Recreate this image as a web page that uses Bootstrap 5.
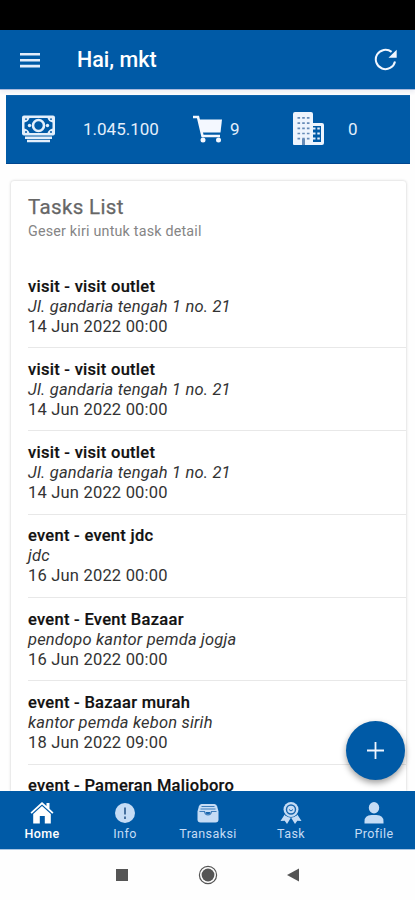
<!DOCTYPE html>
<html lang="id">
<head>
<meta charset="utf-8">
<meta name="viewport" content="width=device-width, initial-scale=1">
<title>Hai, mkt</title>
<link href="https://cdn.jsdelivr.net/npm/bootstrap@5.3.0/dist/css/bootstrap.min.css" rel="stylesheet">
<style>
:root{--brand:#005aa6;--soft:#c5dcf5}
body{font-family:Roboto,"Liberation Sans",sans-serif;background:#fefefe;color:#222}
svg{display:block;flex:none}
.phone{height:900px}
.status-strip{height:30px;background:#000}
.app-header{height:59px;background:var(--brand);padding:1px 17px 0 20px;box-shadow:0 1px 0 #a9b9dc,0 4px 3px #f1f2f6;z-index:1}
.app-title{font-size:21.5px;font-weight:500;line-height:28px;margin-left:37px}
.stats{height:69px;margin:6px 5px 0 6px;background:var(--brand);color:#e4effb;font-size:17px;border-bottom:1px solid #00468f}
.stats span{padding-top:2px}
.stat-money{width:187px;padding-left:15px}
.stat-cart{width:100px}
.task-panel{margin:17px 9px 0 11px;border:0;border-radius:3px 3px 0 0;background:#fff;box-shadow:0 0 3px rgba(0,0,0,.22);min-height:0}
.panel-head{height:83.9px;padding:12.600px 17px 0}
.panel-title{font-size:20.5px;line-height:27px;font-weight:400;color:#666;letter-spacing:.36px;-webkit-text-stroke:.25px #666}
.panel-sub{font-size:14.3px;line-height:20px;color:#858585;letter-spacing:.2px}
.task-row{height:83.3px;flex:none;margin-left:17px;padding:11.700px 0 0;border-bottom:1.5px solid #e8e8e8;font-size:16.5px;line-height:20px;white-space:nowrap}
.task-name{font-weight:500;color:#111;letter-spacing:.28px;-webkit-text-stroke:.2px #111}
.task-place{letter-spacing:.18px;color:#333}
.task-date{letter-spacing:.2px;color:#333}
.fab{width:59px;height:59px;right:10px;bottom:11px;background:var(--brand);box-shadow:0 3px 6px rgba(0,0,0,.38)}
.tabs{height:59px;background:var(--brand);border-bottom:1px solid #a9c5e2}
.tab{color:var(--soft);font-size:12.5px;line-height:16px;padding:10px 0 0 1px;letter-spacing:.42px}
.tab span{padding-top:1px}
.tab.active{color:#fff;font-weight:500}
.system-nav{height:50px;background:#fefefe;gap:66px}
</style>
<script src="https://cdn.jsdelivr.net/npm/bootstrap@5.3.0/dist/js/bootstrap.bundle.min.js"></script>
</head>
<body>
<div class="phone d-flex flex-column overflow-hidden">
<div class="status-strip flex-shrink-0"></div>
<header class="app-header d-flex align-items-center flex-shrink-0 text-white position-relative">
<svg width="20" height="16" viewBox="0 0 20 16" fill="none" stroke="#e4edfb" stroke-width="2.6"><path d="M0 2.3h20M0 8.2h20M0 14.1h20"/></svg>
<div class="app-title">Hai, mkt</div>
<svg class="ms-auto" width="24" height="24" viewBox="0 0 24 24"><path d="M17.6 3.9A9.7 9.7 0 1 0 21 13.5" fill="none" stroke="#f2f7ff" stroke-width="2"/><path d="M22.7 1.7v8.1h-8.2z" fill="#f2f7ff"/></svg>
</header>
<main class="d-flex flex-column flex-grow-1 position-relative overflow-hidden">
<section class="stats d-flex align-items-center flex-shrink-0">
<div class="stat-money d-flex align-items-center">
<svg width="35" height="30" viewBox="0 0 35 30"><rect x="1" y="1.5" width="33" height="20" rx="2" fill="#e4effb"/><path d="M8.500 4h18q1 3.500 5 4.500v6q-4 1-5 4.500h-18q-1-3.500-5-4.500v-6q4-1 5-4.500z" fill="#005aa6"/><circle cx="17.500" cy="11.500" r="5.500" fill="none" stroke="#e4effb" stroke-width="2.600"/><circle cx="8.500" cy="11.500" r="1.700" fill="#e4effb"/><circle cx="26.500" cy="11.500" r="1.700" fill="#e4effb"/><path d="M4 5.200h2M29 5.200h2M4 18h2M29 18h2" stroke="#005aa6" stroke-width="1.300"/><path d="M4 23.800h27M6 27h23" stroke="#e4effb" stroke-width="2.500"/></svg>
<span style="margin-left:27px">1.045.100</span>
</div>
<div class="stat-cart d-flex align-items-center gap-2">
<svg width="29" height="28" viewBox="0 0 29 28"><path d="M0 2h5L9.500 21h17.500" fill="none" stroke="#f4f8ff" stroke-width="2.600"/><path d="M5.500 4.500H29l-1.500 13H8.500z" fill="#f4f8ff"/><circle cx="10" cy="25" r="2.500" fill="#f4f8ff"/><circle cx="25.500" cy="25" r="2.500" fill="#f4f8ff"/></svg>
<span>9</span>
</div>
<div class="d-flex align-items-center gap-4">
<svg width="31" height="34" viewBox="0 0 31 34"><path d="M0 32V2q0-2 2-2h16q2 0 2 2v9h9q2 0 2 2v18q0 2-2 2H1q-1 0-1-1z" fill="#edf4fd"/><path d="M20 14h8v16h-8z" fill="#005aa6"/><path d="M4.500 5.900h12M4.500 11.100h12M4.500 16.300h12M4.500 21.500h12M4.500 26.700h12" stroke="#668bb7" stroke-width="1.700" stroke-dasharray="2.600 2.100"/><path d="M20 16.500h8M20 21.500h8M20 26.500h8" stroke="#e4effb" stroke-width="2.200" stroke-dasharray="2.500 1.800"/><path d="M9 27h3v6H9z" fill="#668bb7"/></svg>
<span>0</span>
</div>
</section>
<section class="task-panel card flex-grow-1 overflow-hidden">
<div class="panel-head flex-shrink-0">
<div class="panel-title">Tasks List</div>
<div class="panel-sub">Geser kiri untuk task detail</div>
</div>
<div class="task-row"><div class="task-name">visit - visit outlet</div><div class="task-place fst-italic">Jl. gandaria tengah 1 no. 21</div><div class="task-date">14 Jun 2022 00:00</div></div>
<div class="task-row"><div class="task-name">visit - visit outlet</div><div class="task-place fst-italic">Jl. gandaria tengah 1 no. 21</div><div class="task-date">14 Jun 2022 00:00</div></div>
<div class="task-row"><div class="task-name">visit - visit outlet</div><div class="task-place fst-italic">Jl. gandaria tengah 1 no. 21</div><div class="task-date">14 Jun 2022 00:00</div></div>
<div class="task-row"><div class="task-name">event - event jdc</div><div class="task-place fst-italic">jdc</div><div class="task-date">16 Jun 2022 00:00</div></div>
<div class="task-row"><div class="task-name">event - Event Bazaar</div><div class="task-place fst-italic">pendopo kantor pemda jogja</div><div class="task-date">16 Jun 2022 00:00</div></div>
<div class="task-row"><div class="task-name">event - Bazaar murah</div><div class="task-place fst-italic">kantor pemda kebon sirih</div><div class="task-date">18 Jun 2022 09:00</div></div>
<div class="task-row"><div class="task-name">event - Pameran Malioboro</div></div>
</section>
<button class="fab btn rounded-circle position-absolute p-0 border-0 d-flex align-items-center justify-content-center" aria-label="Tambah"><svg width="17" height="17" viewBox="0 0 17 17" stroke="#f0f6ff" stroke-width="1.800"><path d="M8.500 0v17M0 8.500h17"/></svg></button>
</main>
<nav class="tabs row row-cols-5 g-0 flex-shrink-0">
<div class="tab active col d-flex flex-column align-items-center">
<svg width="24" height="24" viewBox="0 0 24 24" fill="#fff"><path d="M12 1l4.500 4V2h3v5.800L23.500 11.500l-1.200 1.300L12 3.500 1.700 12.800.5 11.500z"/><path d="M12 5l8.800 8V22.500h-6V15h-5v7.500H3.200V13z"/></svg><span>Home</span></div>
<div class="tab col d-flex flex-column align-items-center">
<svg width="24" height="24" viewBox="0 0 24 24"><circle cx="12" cy="12" r="10" fill="#c5dcf5"/><path d="M12 6.500v7M12 15.500v2.500" stroke="#47719f" stroke-width="2"/></svg><span>Info</span></div>
<div class="tab col d-flex flex-column align-items-center">
<svg width="24" height="24" viewBox="0 0 24 24"><path d="M5.500 3h13q2 0 2.700 2.500l1.300 5V18.500q0 3-3 3h-15q-3 0-3-3v-8l1.300-5Q3.500 3 5.500 3z" fill="#c5dcf5"/><path d="M3.500 10.500h5q.5 3.500 3.500 3.500t3.500-3.500h5M5.500 5.500h13M4.500 8h15" fill="none" stroke="#3d7dbb" stroke-width="1.200"/><path d="M9.500 11h5q-.5 2.500-2.500 2.500t-2.500-2.500z" fill="#1765ad"/></svg><span>Transaksi</span></div>
<div class="tab col d-flex flex-column align-items-center">
<svg width="24" height="24" viewBox="0 0 24 24"><path d="M6 13L1.500 20l4.200-.2L8 23l4-6.500 4 6.500 2.300-3.200 4.200.2L18 13z" fill="#c5dcf5"/><circle cx="12" cy="8.500" r="8.300" fill="#005aa6"/><circle cx="12" cy="8.500" r="7.500" fill="#c5dcf5"/><circle cx="12" cy="8.500" r="4.500" fill="none" stroke="#1765ad" stroke-width="1.400"/><path d="M10 8.500q2 3 4 0" fill="none" stroke="#1765ad"/></svg><span>Task</span></div>
<div class="tab col d-flex flex-column align-items-center">
<svg width="24" height="24" viewBox="0 0 24 24" fill="#c5dcf5"><ellipse cx="12" cy="6.800" rx="5.200" ry="5.700"/><path d="M2.500 22.500v-2q0-6.500 7-6.500h5q7 0 7 6.500v2z"/></svg><span>Profile</span></div>
</nav>
<div class="system-nav d-flex align-items-center justify-content-center flex-shrink-0">
<svg width="20" height="20" viewBox="0 0 20 20"><path d="M4 4h12v12H4z" fill="#555"/></svg>
<svg width="20" height="20" viewBox="0 0 20 20"><circle cx="10" cy="10" r="8.600" fill="none" stroke="#555" stroke-width="1.200"/><circle cx="10" cy="10" r="6.400" fill="#555"/></svg>
<svg width="20" height="20" viewBox="0 0 20 20"><path d="M15 3.500v13L3 10z" fill="#555"/></svg>
</div>
</div>
</body>
</html>
